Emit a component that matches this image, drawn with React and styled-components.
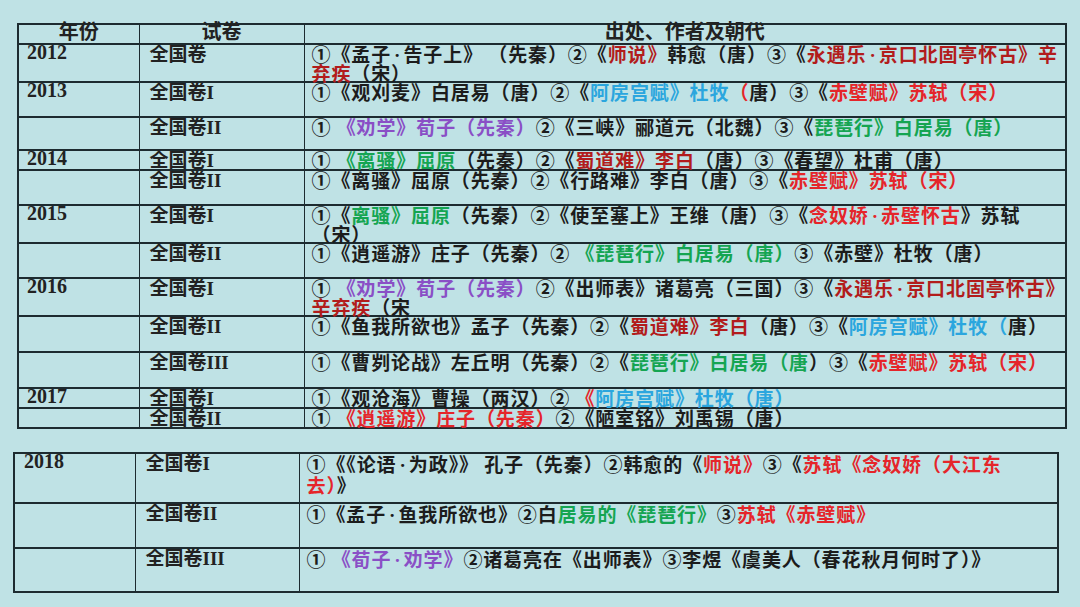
import React from "react";
import styled, { createGlobalStyle } from "styled-components";

const GlobalStyle = createGlobalStyle`
  html, body {
    margin: 0;
    padding: 0;
    background: #bfe2e5;
  }
`;

const COLORS = {
  k: "#1c1c1c",
  r: "#e5252a",
  d: "#b21c1c",
  b: "#2ba6de",
  g: "#15a552",
  p: "#8a4fc6",
};

const Page = styled.div`
  width: 1080px;
  height: 607px;
  padding: 23px 0 0 13px;
  box-sizing: border-box;
  overflow: hidden;
  background: #bfe2e5;
  font-family: "Noto Sans CJK SC", "Noto Sans", sans-serif;
  color: #1c1c1c;
`;

const Table = styled.table`
  border-collapse: collapse;
  table-layout: fixed;
  width: ${({ $w }) => $w}px;
  margin-left: ${({ $ml }) => $ml || 0}px;
  margin-bottom: ${({ $mb }) => $mb || 0}px;
  border: 2px solid #1d2b30;
`;

const Row = styled.tr`
  height: ${({ $h }) => $h}px;
`;

const Head = styled.th`
  padding: 0;
  height: 18px;
  vertical-align: top;
  text-align: center;
  font-size: 20px;
  line-height: 12px;
  font-weight: 700;
  color: #222;
  border-left: 1.5px solid #1d2b30;
  border-bottom: 2px solid #1d2b30;
`;

const Cell = styled.td`
  padding: 0 0 0 ${({ $pl }) => $pl}px;
  vertical-align: top;
  border-left: 1.5px solid #1d2b30;
  border-bottom: 2px solid #1d2b30;
`;

const Year = styled.div`
  font-family: "Liberation Serif", "Times New Roman", serif;
  font-weight: 700;
  font-size: 20px;
  line-height: 15px;
  color: #222;
`;

const Paper = styled.div`
  font-size: 19px;
  line-height: 16px;
  font-weight: 700;
  color: #222;
`;

const Roman = styled.span`
  font-family: "Liberation Serif", "Times New Roman", serif;
  font-size: 19px;
`;

const Source = styled.div`
  font-size: 19px;
  line-height: ${({ $lh }) => $lh}px;
  font-weight: 700;
  white-space: pre;
  color: #1c1c1c;
  letter-spacing: 0.9px;
`;

const Seg = styled.span`
  color: ${({ $c }) => COLORS[$c] || COLORS.k};
`;

const Dot = styled.span`
  font-family: "Liberation Serif", serif;
  letter-spacing: 0;
  padding: 0 3px;
`;

const withDots = (text) =>
  text.split("·").flatMap((piece, i) =>
    i === 0 ? [piece] : [<Dot key={i}>·</Dot>, piece]
  );

const rows1 = [
  { year: "2012", roman: "", h: 37, parts: [["①《孟子·告子上》 （先秦）②《"], ["师说》", "d"], ["韩愈（唐）③《"], ["永遇乐·京口北固亭怀古》辛\n弃疾", "d"], ["（宋）"]] },
  { year: "2013", roman: "I", h: 35, parts: [["①《观刈麦》白居易（唐）②《"], ["阿房宫赋》杜牧", "b"], ["（", "r"], ["唐）③《"], ["赤壁赋》苏轼（宋）", "r"]] },
  { year: "", roman: "II", h: 33, parts: [["① "], ["《劝学》荀子（先秦）", "p"], ["②《三峡》郦道元（北魏）③《"], ["琵琶行》白居易（唐）", "g"]] },
  { year: "2014", roman: "I", h: 19, parts: [["① "], ["《离骚》屈原", "g"], ["（先秦）②《"], ["蜀道难》李白", "d"], ["（唐）③《春望》杜甫（唐）"]] },
  { year: "", roman: "II", h: 35, parts: [["①《离骚》屈原（先秦）②《行路难》李白（唐）③《"], ["赤壁赋》苏轼（宋）", "r"]] },
  { year: "2015", roman: "I", h: 36, parts: [["①《"], ["离骚》屈原", "g"], ["（先秦）②《使至塞上》王维（唐）③《"], ["念奴娇·赤壁怀古", "r"], ["》苏轼\n（宋）"]] },
  { year: "", roman: "II", h: 35, parts: [["①《逍遥游》庄子（先秦）② "], ["《琵琶行》白居易（唐）", "g"], ["③《赤壁》杜牧（唐）"]] },
  { year: "2016", roman: "I", h: 37, parts: [["① "], ["《劝学》荀子（先秦）", "p"], ["②《出师表》诸葛亮（三国）③《"], ["永遇乐·京口北固亭怀古》\n辛弃疾", "d"], ["（宋"]] },
  { year: "", roman: "II", h: 36, parts: [["①《鱼我所欲也》孟子（先秦）②《"], ["蜀道难》李白", "d"], ["（唐）③《"], ["阿房宫赋》杜牧（", "b"], ["唐）"]] },
  { year: "", roman: "III", h: 36, parts: [["①《曹刿论战》左丘明（先秦）②《"], ["琵琶行》白居易（唐", "g"], ["）③《"], ["赤壁赋》苏轼（宋）", "r"]] },
  { year: "2017", roman: "I", h: 20, parts: [["①《观沧海》曹操（两汉）② "], ["《", "r"], ["阿房宫赋》杜牧（唐）", "b"]] },
  { year: "", roman: "II", h: 18, parts: [["① "], ["《逍遥游》庄子（先秦）", "r"], ["②《陋室铭》刘禹锡（唐）"]] },
];

const rows2 = [
  { year: "2018", roman: "I", h: 50, parts: [["①《《论语·为政》》 孔子（先秦）②韩愈的《"], ["师说》", "r"], ["③《"], ["苏轼《念奴娇（大江东\n去）", "r"], ["》"]] },
  { year: "", roman: "II", h: 45, parts: [["①《孟子·鱼我所欲也》②白"], ["居易的《琵琶行》", "g"], ["③"], ["苏轼《赤壁赋》", "r"]] },
  { year: "", roman: "III", h: 44, parts: [["① "], ["《荀子·劝学》", "p"], ["②诸葛亮在《出师表》③李煜《虞美人（春花秋月何时了）》"]] },
];

const Body = ({ rows, lh, pad }) =>
  rows.map((row, i) => (
    <Row key={i} $h={row.h}>
      <Cell $pl={pad[0]}>
        <Year>{row.year}</Year>
      </Cell>
      <Cell $pl={pad[1]}>
        <Paper>
          全国卷<Roman>{row.roman}</Roman>
        </Paper>
      </Cell>
      <Cell $pl={pad[2]}>
        <Source $lh={lh}>
          {row.parts.map(([text, c], j) => (
            <Seg key={j} $c={c}>
              {withDots(text)}
            </Seg>
          ))}
        </Source>
      </Cell>
    </Row>
  ));

export default function App() {
  return (
    <>
      <GlobalStyle />
      <Page>
        <Table $w={1050} $ml={4} $mb={23}>
          <colgroup>
            <col style={{ width: 121 }} />
            <col style={{ width: 165 }} />
            <col />
          </colgroup>
          <thead>
            <tr>
              <Head>年份</Head>
              <Head>试卷</Head>
              <Head>出处、作者及朝代</Head>
            </tr>
          </thead>
          <tbody>
            <Body rows={rows1} lh={17} pad={[8, 10, 7]} />
          </tbody>
        </Table>
        <Table $w={1046}>
          <colgroup>
            <col style={{ width: 121 }} />
            <col style={{ width: 164 }} />
            <col />
          </colgroup>
          <tbody>
            <Body rows={rows2} lh={19} pad={[9, 10, 7]} />
          </tbody>
        </Table>
      </Page>
    </>
  );
}
